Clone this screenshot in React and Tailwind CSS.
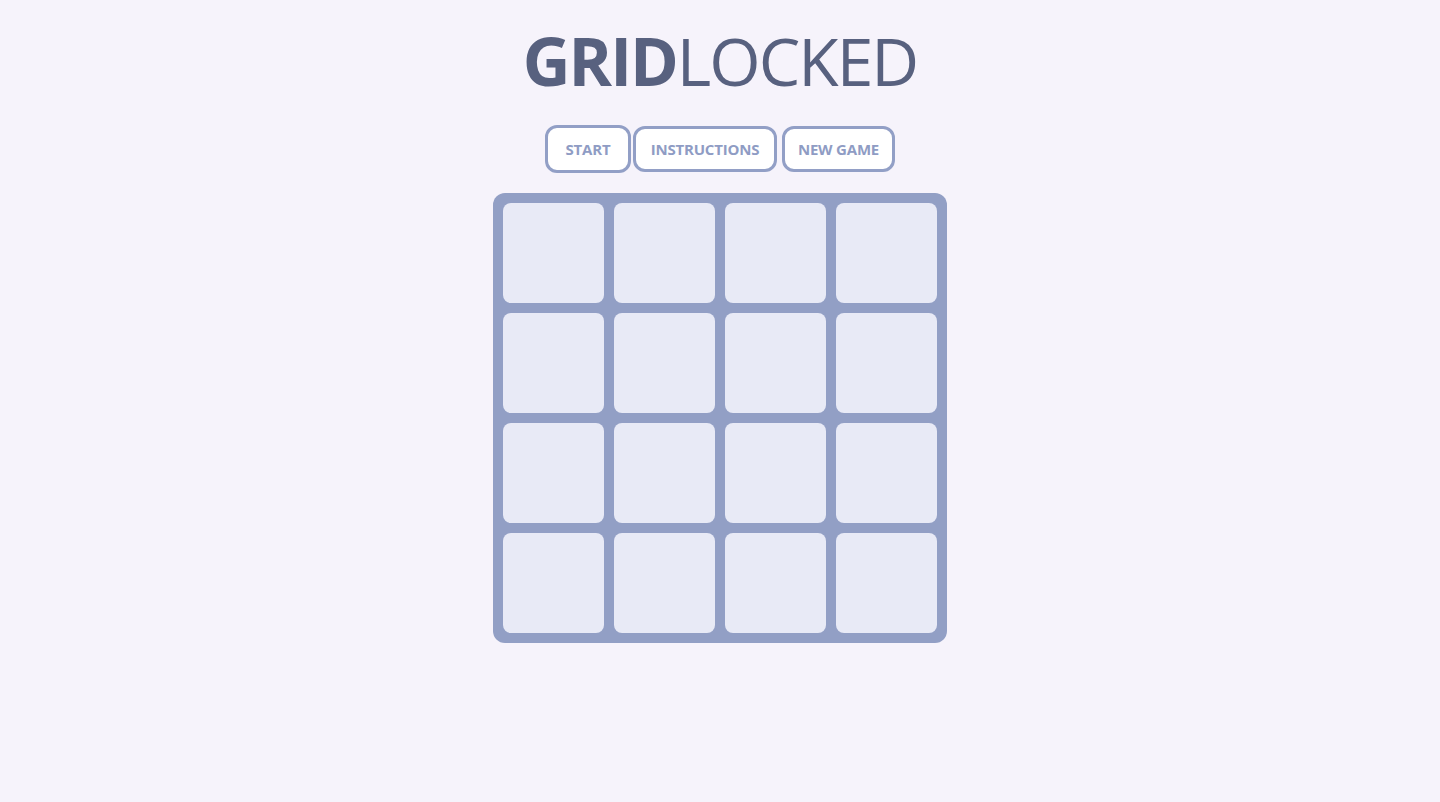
import React from "react"

const font = { fontFamily: '"Open Sans", "Noto Sans", sans-serif' }

function Btn({ children, className }) {
    return (
        <button
            className={"flex items-center justify-center rounded-[12px] border-[3px] border-[#929fc6] bg-white text-[15px] font-bold tracking-[-0.2px] text-[#8f9cc4] " + className}
        >
            {children}
        </button>
    )
}

export default function App() {
    const cells = Array.from({ length: 16 })

    return (
        <div className="min-h-[802px] w-full bg-[#f6f3fb]" style={font}>
            <div className="flex flex-col items-center pt-[20px]">
                <h1 className="text-[66px] leading-[80px] tracking-[-2px] text-[#58617f]">
                    <span className="font-bold">GRID</span>
                    <span className="font-normal">LOCKED</span>
                </h1>
                <div className="mt-[25px] flex items-center">
                    <Btn className="h-[48px] w-[86px]">START</Btn>
                    <Btn className="ml-[2px] h-[46px] w-[144px]">INSTRUCTIONS</Btn>
                    <Btn className="ml-[5px] h-[46px] w-[113px]">NEW GAME</Btn>
                </div>
                <div className="mt-[20px] grid grid-cols-[repeat(4,101px)] grid-rows-[repeat(4,100px)] gap-[10px] rounded-[12px] bg-[#929fc5] p-[10px]">
                    {cells.map((_, i) => (
                        <div key={i} className="rounded-[8px] bg-[#e8eaf6]" />
                    ))}
                </div>
            </div>
        </div>
    )
}
